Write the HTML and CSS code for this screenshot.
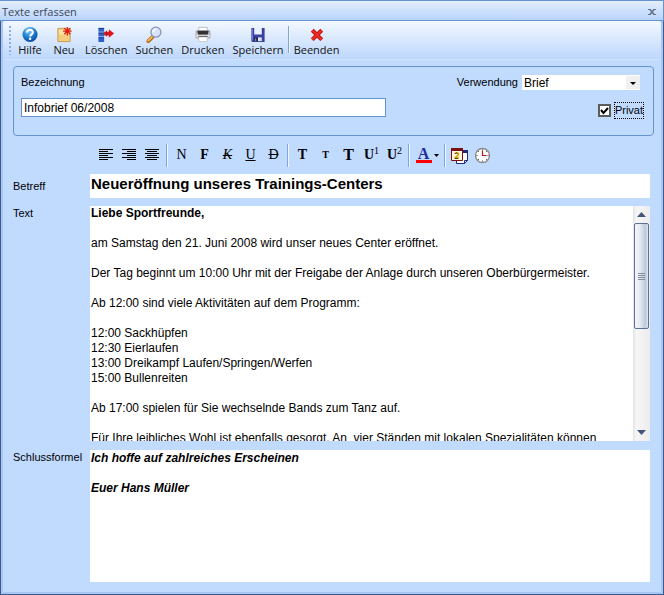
FILE: index.html
```html
<!DOCTYPE html>
<html lang="de">

<head>
    <meta charset="utf-8">
    <title>Texte erfassen</title>
    <link rel="stylesheet" href="styles.css">
</head>

<body>
    <div class="fenster">
        <header class="titel">
            <span>Texte erfassen</span>
            <button type="button" class="schliessen" aria-label="Schließen">
                <svg width="8" height="8" viewBox="0 0 8 8"><path d="M0 1.500h3M5 1.500h3M0 6.500h3M5 6.500h3" stroke="#66748c"/><path d="M2 1.500l4 5M6 1.500l-4 5" stroke="#66748c" stroke-width="1.600"/></svg>
            </button>
        </header>
        <div class="inhalt">
            <nav class="toolbar">
                <span class="griff"></span>
                <button type="button">
                    <svg width="18" height="18" viewBox="0 0 18 18">
                        <defs><radialGradient id="kugel" cx="40%" cy="25%" r="75%"><stop offset="0" stop-color="#8fd0fa"/><stop offset=".5" stop-color="#2386da"/><stop offset="1" stop-color="#0a4a9c"/></radialGradient></defs>
                        <circle cx="9" cy="9" r="8" fill="url(#kugel)"/>
                        <path d="M5.800 7C5.800 3.200 12 3 12 6.600c0 2.200-2.800 2.300-2.800 4.600" fill="none" stroke="#fff" stroke-width="2.200"/>
                        <circle cx="9.100" cy="13.600" r="1.300" fill="#fff"/>
                    </svg>
                    Hilfe
                </button>
                <button type="button">
                    <svg width="18" height="18" viewBox="0 0 18 18">
                        <path d="M2.500 2.500h13v14h-13z" fill="#f3cd7d" stroke="#c99b4e"/>
                        <path d="M4 4h6v5H4z" fill="#fbe3a6"/>
                        <path d="M12.500 1v9M8 5.500h9M9.300 2.300l6.400 6.400M15.700 2.300L9.300 8.700" stroke="#df1a12" stroke-width="1.300"/>
                    </svg>
                    Neu
                </button>
                <button type="button">
                    <svg width="18" height="18" viewBox="0 0 18 18">
                        <path d="M1 2h6v4H1zM1 7h6v4H1zM1 12h6v5H1z" fill="#2f63c8"/>
                        <path d="M1 2.500h6M1 7.500h6M1 12.500h6" stroke="#15398f"/>
                        <path d="M7 6h5V3.500L17.500 8 12 12.500V10H7z" fill="#e01414"/>
                        <path d="M9.500 5v6" stroke="#8c1d4a"/>
                    </svg>
                    Löschen
                </button>
                <button type="button">
                    <svg width="18" height="18" viewBox="0 0 18 18">
                        <path d="M7.500 11.500L3 16" stroke="#b3661c" stroke-width="4" stroke-linecap="round"/>
                        <path d="M7 11.500L3 15.500" stroke="#f8b856" stroke-width="2" stroke-linecap="round"/>
                        <circle cx="11" cy="6.500" r="5.300" fill="#d5e4fb" stroke="#8d93bd" stroke-width="1.400"/>
                        <path d="M8 6.500a3 3 0 0 1 3-3" fill="none" stroke="#fff" stroke-width="1.500"/>
                    </svg>
                    Suchen
                </button>
                <button type="button">
                    <svg width="18" height="18" viewBox="0 0 18 18">
                        <path d="M4.500 1.500h9V6h-9z" fill="#fff" stroke="#b9bcc2"/>
                        <rect x="1" y="4.500" width="16" height="9" rx="1.500" fill="#b4b5b8"/>
                        <path d="M3 5h12l-1 4H4z" fill="#333"/>
                        <path d="M2 10.500h14" stroke="#e7e7e7" stroke-width="2"/>
                        <path d="M4.500 11.500h9v5h-9z" fill="#fff" stroke="#c5c9d2"/>
                        <path d="M4 11h10" stroke="#555"/>
                    </svg>
                    Drucken
                </button>
                <button type="button">
                    <svg width="18" height="18" viewBox="0 0 18 18">
                        <path d="M2 2h14v15H3l-1-1z" fill="#3a3fa2"/>
                        <path d="M3 3v12" stroke="#7b83dc"/>
                        <path d="M5 2h8v7H5z" fill="#eaf1ff"/>
                        <path d="M5 12h8v4H5z" fill="#222a54"/>
                        <path d="M9 12h4v4H9z" fill="#dce4f4"/>
                        <path d="M6.500 13v3" stroke="#8992b3"/>
                    </svg>
                    Speichern
                </button>
                <span class="strich"></span>
                <button type="button">
                    <svg width="18" height="18" viewBox="0 0 18 18">
                        <path d="M4 4.500l10 10M14 4.500l-10 10" stroke="#b01010" stroke-width="4.200"/>
                        <path d="M4 4.500l10 10M14 4.500l-10 10" stroke="#ee2b22" stroke-width="2.600"/>
                    </svg>
                    Beenden
                </button>
            </nav>

            <section class="gruppe">
                <div class="bezeichnung">
                    <label for="bezeichnung">Bezeichnung</label>
                    <input type="text" id="bezeichnung" value="Infobrief 06/2008">
                </div>
                <div class="verwendung">
                    <div class="zeile">
                        <label for="verwendung">Verwendung</label>
                        <select id="verwendung">
                            <option>Brief</option>
                        </select>
                    </div>
                    <div class="zeile">
                        <input type="checkbox" id="privat" checked>
                        <label for="privat" class="fokus">Privat</label>
                    </div>
                </div>
            </section>

            <div class="format">
                <button type="button" aria-label="Linksbündig"><svg width="15" height="12" viewBox="0 0 15 12"><path d="M0 .5h14M0 2.500h9M0 4.500h14M0 6.500h9M0 8.500h14M0 10.500h9" stroke="#000"/></svg></button>
                <button type="button" aria-label="Rechtsbündig"><svg width="15" height="12" viewBox="0 0 15 12"><path d="M0 .5h14M5 2.500h9M0 4.500h14M5 6.500h9M0 8.500h14M5 10.500h9" stroke="#000"/></svg></button>
                <button type="button" aria-label="Zentriert"><svg width="15" height="12" viewBox="0 0 15 12"><path d="M0 .5h14M2 2.500h10M0 4.500h14M2 6.500h10M0 8.500h14M2 10.500h10" stroke="#000"/></svg></button>
                <span class="strich"></span>
                <button type="button">N</button>
                <button type="button" class="fett">F</button>
                <button type="button" class="kursiv">K</button>
                <button type="button" class="unter">U</button>
                <button type="button" class="durch">D</button>
                <span class="strich"></span>
                <button type="button" class="fett">T</button>
                <button type="button" class="fett klein">T</button>
                <button type="button" class="fett gross">T</button>
                <button type="button" class="fett">U<sup>1</sup></button>
                <button type="button" class="fett">U<sup>2</sup></button>
                <span class="strich"></span>
                <button type="button" class="farbe" aria-label="Schriftfarbe">
                    <span class="buchstabe">A</span>
                    <svg width="5" height="3" viewBox="0 0 5 3"><path d="M0 0h5L2.500 3z"/></svg>
                </button>
                <span class="strich"></span>
                <button type="button" aria-label="Datum">
                    <svg width="17" height="17" viewBox="0 0 17 17">
                        <path d="M7 3.500h9.500v10l-3 3H5.500V13z" fill="#fff" stroke="#1c2a86"/>
                        <path d="M13.500 16.500v-3h3" fill="none" stroke="#1c2a86"/>
                        <path d="M12 3h5v3h-5z" fill="#1c2a86"/>
                        <path d="M.5 1.500h11v12H.5z" fill="#fff8dc" stroke="#7a1010"/>
                        <path d="M0 1h12v3H0z" fill="#7a1010"/>
                        <path d="M4 7c0-1.500 3.500-1.500 3.500.3C7.500 8.500 5 9.500 4 11h4" fill="none" stroke="#d9a300" stroke-width="1.600"/>
                        <path d="M4 7c.5-1.200 2-1.200 2.500-.5M4 11.500h3" fill="none" stroke="#222" stroke-width=".8"/>
                    </svg>
                </button>
                <button type="button" aria-label="Uhrzeit">
                    <svg width="17" height="17" viewBox="0 0 17 17">
                        <circle cx="8.500" cy="8.500" r="7" fill="#fff" stroke="#8a8a8a" stroke-width="1.400"/>
                        <path d="M8.500 2.500v1M8.500 13.500v1M2.500 8.500h1M13.500 8.500h1M4.200 4.200l.8.8M12 12l.8.8M4.200 12.800l.8-.8M12 5l.8-.8" stroke="#444"/>
                        <path d="M8.500 3.500v5H12.500" fill="none" stroke="#c01818" stroke-width="1.200"/>
                    </svg>
                </button>
            </div>

            <form class="felder">
                <label for="betreff" class="mitte">Betreff</label>
                <input type="text" id="betreff" class="betreff" value="Neueröffnung unseres Trainings-Centers">

                <span class="label" id="lbltext">Text</span>
                <div class="editor">
                    <div class="text" contenteditable="true" spellcheck="false" role="textbox" aria-multiline="true" aria-labelledby="lbltext">
                        <p><b>Liebe Sportfreunde,</b></p>
                        <p>am Samstag den 21. Juni 2008 wird unser neues Center eröffnet.</p>
                        <p>Der Tag beginnt um 10:00 Uhr mit der Freigabe der Anlage durch unseren Oberbürgermeister.</p>
                        <p>Ab 12:00 sind viele Aktivitäten auf dem Programm:</p>
                        <p>12:00 Sackhüpfen<br>12:30 Eierlaufen<br>13:00 Dreikampf Laufen/Springen/Werfen<br>15:00 Bullenreiten</p>
                        <p>Ab 17:00 spielen für Sie wechselnde Bands zum Tanz auf.</p>
                        <p>Für Ihre leibliches Wohl ist ebenfalls gesorgt. An&nbsp; vier Ständen mit lokalen Spezialitäten können</p>
                    </div>
                    <div class="leiste">
                        <button type="button" aria-label="Nach oben"><svg width="9" height="5" viewBox="0 0 9 5"><path d="M0 5h9L4.500 0z" fill="#44557c"/></svg></button>
                        <div class="schieber"><span></span></div>
                        <button type="button" class="ab" aria-label="Nach unten"><svg width="9" height="5" viewBox="0 0 9 5"><path d="M0 0h9L4.500 5z" fill="#44557c"/></svg></button>
                    </div>
                </div>

                <label for="schluss">Schlussformel</label>
                <textarea id="schluss" class="schluss" spellcheck="false">Ich hoffe auf zahlreiches Erscheinen

Euer Hans Müller</textarea>
            </form>
        </div>
    </div>
</body>

</html>
```

FILE: styles.css
```css
*{
    box-sizing: border-box;
}
body{
    margin: 0;
    font-family: 'Liberation Sans', Arial, sans-serif;
    font-size: 12px;
    color: #000;
}
button{
    border: 0;
    margin: 0;
    padding: 0;
    background: none;
    color: #000;
}
input, select, textarea{
    font: inherit;
    color: #000;
    margin: 0;
    border: 0;
    border-radius: 0;
    background-color: #fff;
    outline: none;
}
.fenster{
    display: flex;
    flex-direction: column;
    min-height: 100vh;
}
.titel{
    display: flex;
    justify-content: space-between;
    align-items: center;
    height: 21px;
    padding: 2px 7px 0 2px;
    border: 1px solid #6593cf;
    border-left-width: 0;
    background: linear-gradient(#e4eefd, #b8d4fa);
    font-family: 'Open Sans', 'Noto Sans', sans-serif;
    font-size: 11px;
    color: #3c4658;
}
.schliessen{
    display: flex;
}
.inhalt{
    flex: 1;
    display: flex;
    flex-direction: column;
    padding: 0 2px 2px;
    border: 1px solid #3b5a8f;
    border-top: 0;
    background: #c1dbff;
    box-shadow: inset 2px 0 #a9c7f2, inset -2px -2px #a9c7f2;
}
.toolbar{
    display: flex;
    align-items: stretch;
    height: 39px;
    padding: 5px 6px 2px;
    background: linear-gradient(#f3f8ff, #bdd7fc);
    border-bottom: 1px solid #cfe2fe;
    border-radius: 3px;
}
.toolbar button{
    display: flex;
    flex-direction: column;
    align-items: center;
    min-width: 34px;
    padding: 0 4px;
    font-family: 'Open Sans', 'Noto Sans', sans-serif;
    font-size: 11px;
    line-height: 14px;
    color: #111;
}
.griff{
    width: 2px;
    margin: 0 2px 2px 0;
    background: repeating-linear-gradient(#8aaee0 0 2px, transparent 2px 4px);
}
.strich{
    width: 2px;
    margin: 2px;
    border-left: 1px solid #7fa6dc;
    border-right: 1px solid #f2f7ff;
}
.toolbar .strich{
    margin: 0 0 4px;
}
.gruppe{
    display: flex;
    justify-content: space-between;
    height: 70px;
    margin: 6px 7px 0 10px;
    padding: 8px 13px 0 7px;
    border: 1px solid #6593cf;
    border-radius: 4px;
}
.bezeichnung{
    display: flex;
    flex-direction: column;
    gap: 8px;
    width: 59%;
}
.bezeichnung input{
    height: 19px;
    padding: 0 2px;
    border: 1px solid #6593cf;
}
.verwendung{
    display: flex;
    flex-direction: column;
    align-items: flex-end;
    gap: 13px;
}
.zeile{
    display: flex;
    align-items: center;
    gap: 4px;
}
label, .label{
    font-size: 11px;
    line-height: 15px;
}
select{
    appearance: none;
    width: 118px;
    height: 15px;
    padding: 0 2px;
    background: #fff url("data:image/svg+xml,%3Csvg xmlns='http://www.w3.org/2000/svg' width='14' height='13'%3E%3Cpath d='M0 0h14v13H0z' fill='%23f0f0f0'/%3E%3Cpath d='M4 6h6L7 9z'/%3E%3C/svg%3E") no-repeat right center;
}
input[type=checkbox]{
    appearance: none;
    width: 13px;
    height: 13px;
    border: 2px solid #5c5c5c;
    background: #fff url("data:image/svg+xml,%3Csvg xmlns='http://www.w3.org/2000/svg' width='9' height='9'%3E%3Cpath d='M1 4l2.500 3L8 2' fill='none' stroke='%23000' stroke-width='2'/%3E%3C/svg%3E") no-repeat center;
}
.fokus{
    outline: 1px dotted #000;
    margin-right: -3px;
}
.format{
    display: flex;
    align-items: center;
    height: 24px;
    margin-top: 7px;
    padding-left: 92px;
}
.format button{
    display: flex;
    align-items: center;
    justify-content: center;
    width: 23px;
    height: 22px;
    font-family: 'Liberation Serif', 'Times New Roman', serif;
    font-size: 14px;
    line-height: 16px;
}
.format .strich{
    height: 23px;
}
.format .fett{
    font-weight: bold;
}
.format .kursiv{
    font-style: italic;
    text-decoration: line-through 1px;
}
.format .unter{
    text-decoration: underline;
}
.format .durch{
    text-decoration: line-through;
}
.format .klein{
    font-size: 10px;
}
.format .gross{
    font-size: 16px;
}
.format sup{
    align-self: flex-start;
    font-size: 10px;
    font-weight: normal;
    line-height: 14px;
}
.format .farbe{
    width: 30px;
    gap: 2px;
}
.buchstabe{
    width: 16px;
    border-bottom: 3px solid #f00;
    font-size: 16px;
    line-height: 13px;
    font-weight: bold;
    color: #1c2a9c;
}
.felder{
    flex: 1;
    display: grid;
    grid-template-columns: 77px 1fr;
    grid-template-rows: 24px 1fr 132px;
    row-gap: 8px;
    margin: 7px 11px 10px 10px;
}
.felder .mitte{
    align-self: center;
}
.betreff{
    width: 100%;
    padding: 0 1px 6px;
    font-size: 15px;
    font-weight: bold;
}
.editor{
    display: flex;
    height: 235px;
    background: #fff;
}
.text{
    flex: 1;
    padding: 0 1px;
    overflow: hidden;
    line-height: 15px;
    outline: none;
}
.text p{
    margin: 0 0 15px;
}
.leiste{
    display: flex;
    flex-direction: column;
    width: 17px;
    background: linear-gradient(90deg, #e4e4e4, #f6f6f6 20%, #ececec);
}
.leiste button{
    display: flex;
    align-items: center;
    justify-content: center;
    height: 17px;
}
.leiste .ab{
    margin-top: auto;
}
.schieber{
    display: flex;
    align-items: center;
    justify-content: center;
    height: 106px;
    margin: 0 1px;
    border: 1px solid #5d7099;
    border-radius: 2px;
    background: linear-gradient(90deg, #f4f6fa, #e6e9f0 40%, #b9c9de 80%, #dfe7f2);
}
.schieber span{
    width: 7px;
    height: 7px;
    background: repeating-linear-gradient(#868c98 0 1px, transparent 1px 2px);
}
.schluss{
    width: 100%;
    padding: 1px;
    resize: none;
    overflow: hidden;
    line-height: 15px;
    font-weight: bold;
    font-style: italic;
}
```
